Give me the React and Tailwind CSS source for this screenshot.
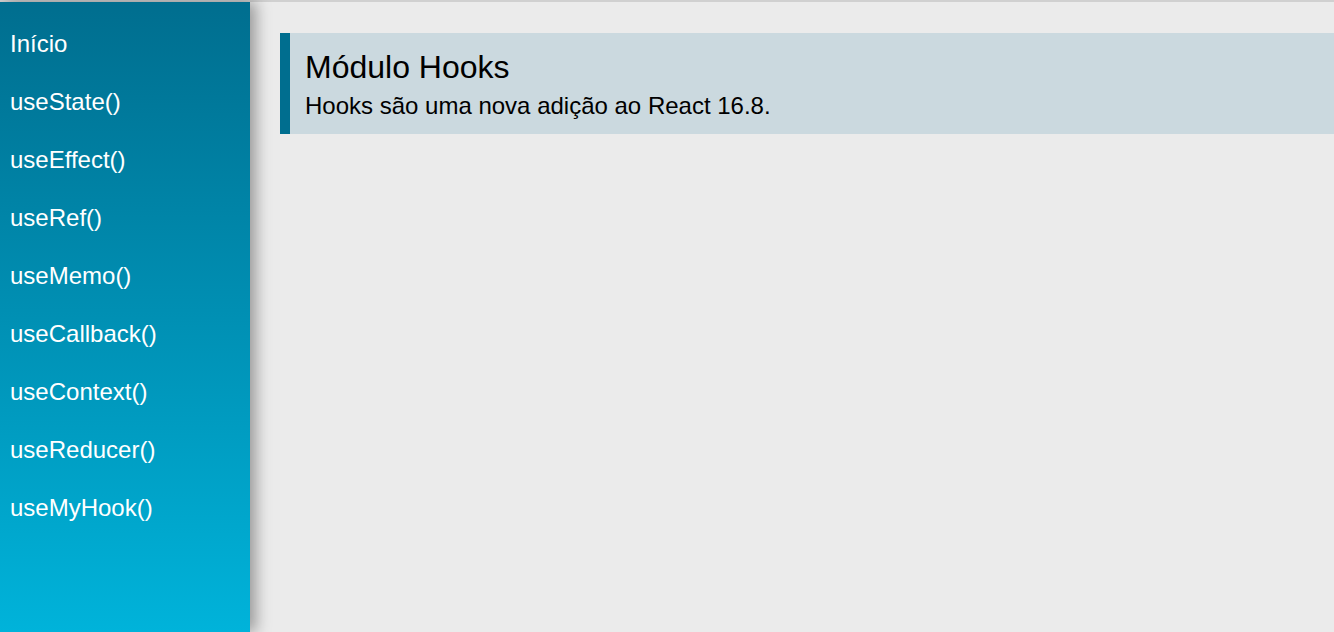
const hooks = [
  "Início",
  "useState()",
  "useEffect()",
  "useRef()",
  "useMemo()",
  "useCallback()",
  "useContext()",
  "useReducer()",
  "useMyHook()",
];

export default function App() {
  return (
    <div className="h-screen flex flex-col bg-[#ebebeb] font-['Liberation_Sans',Arial,sans-serif] overflow-hidden">
      {/* top rule */}
      <div className="h-[2px] bg-[#d0d0d0] shrink-0" />

      <div className="flex flex-1 min-h-0">
        {/* Sidebar */}
        <nav className="w-[250px] shrink-0 bg-gradient-to-b from-[#006e8f] to-[#00b3da] shadow-[6px_0_14px_rgba(0,0,0,0.35)] pt-[13px] z-10">
          <ul>
            {hooks.map((name) => (
              <li key={name}>
                <a href="#" className="block pl-[10px] py-[15px] text-[24px] leading-[28px] text-white">
                  {name}
                </a>
              </li>
            ))}
          </ul>
        </nav>

        {/* Content */}
        <main className="flex-1 pl-[30px] pt-[31px]">
          <div className="bg-[#cbd9df] border-l-[10px] border-[#006e8f] pl-[15px] pt-[16px] pb-[14px]">
            <h1 className="text-[32px] leading-[36px] text-black">Módulo Hooks</h1>
            <p className="mt-[7px] text-[24px] leading-[28px] text-black">
              Hooks são uma nova adição ao React 16.8.
            </p>
          </div>
        </main>
      </div>
    </div>
  );
}
